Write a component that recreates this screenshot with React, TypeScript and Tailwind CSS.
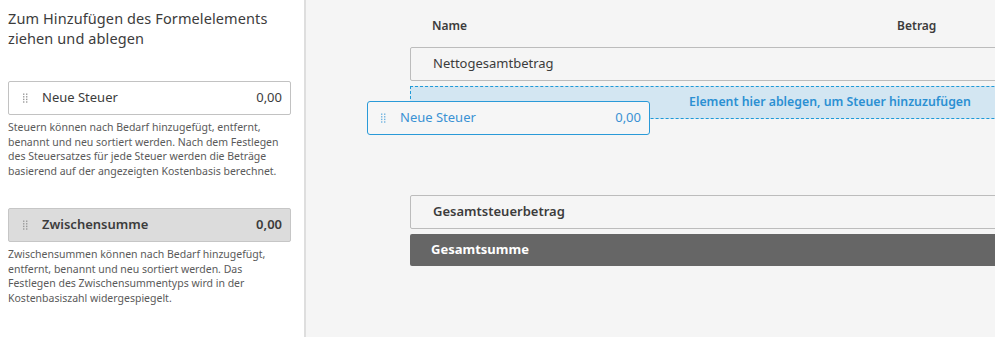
import React from 'react';

const font = { fontFamily: '"Noto Sans", "Open Sans", Arial, sans-serif' };

const Grip = ({ color = '#9a9a9a' }: { color?: string }) => (
  <svg width="5" height="10" viewBox="0 0 5 10" className="flex-shrink-0">
    {[0, 1].map((c) =>
      [0, 1, 2, 3].map((r) => (
        <rect key={`${c}-${r}`} x={c * 3} y={r * 2.6 + 0.5} width="1.4" height="1.4" fill={color} />
      ))
    )}
  </svg>
);

const PaletteCard = ({ label, shaded }: { label: string; shaded?: boolean }) => (
  <div
    className={`flex items-center h-[34px] pl-[14px] pr-[8px] rounded-[2px] border ${
      shaded ? 'bg-[#dcdcdc] border-[#c6c6c6] font-semibold' : 'bg-white border-[#c2c2c2]'
    } text-[13px] text-[#3c3c3c]`}
  >
    <Grip />
    <span className="ml-[14px] flex-1">{label}</span>
    <span>0,00</span>
  </div>
);

export default function App() {
  return (
    <div className="flex w-[995px] h-[337px] overflow-hidden bg-[#f5f5f5]" style={font}>
      <div className="w-[306px] flex-shrink-0 bg-white border-r-2 border-[#dedede] pl-[8px] pr-[13px] pt-[8px]">
        <h2 className="text-[14.5px] leading-[20px] tracking-[0.1px] text-[#3c3c3c]">
          Zum Hinzufügen des Formelelements
          <br />
          ziehen und ablegen
        </h2>
        <div className="mt-[33px]">
          <PaletteCard label="Neue Steuer" />
        </div>
        <p className="mt-[5px] text-[10.5px] leading-[14.5px] text-[#5a5a5a]">
          Steuern können nach Bedarf hinzugefügt, entfernt, benannt und neu sortiert werden. Nach dem Festlegen
          des Steuersatzes für jede Steuer werden die Beträge basierend auf der angezeigten Kostenbasis berechnet.
        </p>
        <div className="mt-[30px]">
          <PaletteCard label="Zwischensumme" shaded />
        </div>
        <p className="mt-[5px] text-[10.5px] leading-[14.5px] text-[#5a5a5a]">
          Zwischensummen können nach Bedarf hinzugefügt, entfernt, benannt und neu sortiert werden. Das Festlegen
          des Zwischensummentyps wird in der Kostenbasiszahl widergespiegelt.
        </p>
      </div>

      <div className="relative flex-1 pl-[104px] pt-[17px]">
        <div className="w-[840px]">
          <div className="flex h-[18px] items-center text-[12px] font-semibold text-[#3c3c3c]">
            <span className="pl-[22px]">Name</span>
            <span className="ml-[430px]">Betrag</span>
          </div>
          <div className="mt-[12px] flex h-[34px] items-center rounded-[2px] border border-[#bcbcbc] pl-[22px] text-[13px] text-[#3c3c3c]">
            Nettogesamtbetrag
          </div>
          <div className="mt-[5px] flex h-[33px] items-center justify-center border border-dashed border-[#1f9ad8] bg-[#d3e6f2] text-[12.3px] font-semibold text-[#2b90d2]">
            Element hier ablegen, um Steuer hinzuzufügen
          </div>
          <div className="mt-[76px] flex h-[34px] items-center rounded-[2px] border border-[#bcbcbc] pl-[22px] text-[13px] font-semibold text-[#3c3c3c]">
            Gesamtsteuerbetrag
          </div>
          <div className="mt-[5px] flex h-[32px] items-center rounded-[2px] bg-[#666666] pl-[21px] text-[13px] font-bold text-white">
            Gesamtsumme
          </div>
        </div>

        <div className="absolute left-[61px] top-[101px] flex h-[34px] w-[283px] items-center rounded-[3px] border border-[#2a9ad8] bg-[#f6f6f6] pl-[13px] pr-[8px] text-[13px] text-[#3a92d4]">
          <Grip color="#6fb3e0" />
          <span className="ml-[14px] flex-1">Neue Steuer</span>
          <span>0,00</span>
        </div>
      </div>
    </div>
  );
}
